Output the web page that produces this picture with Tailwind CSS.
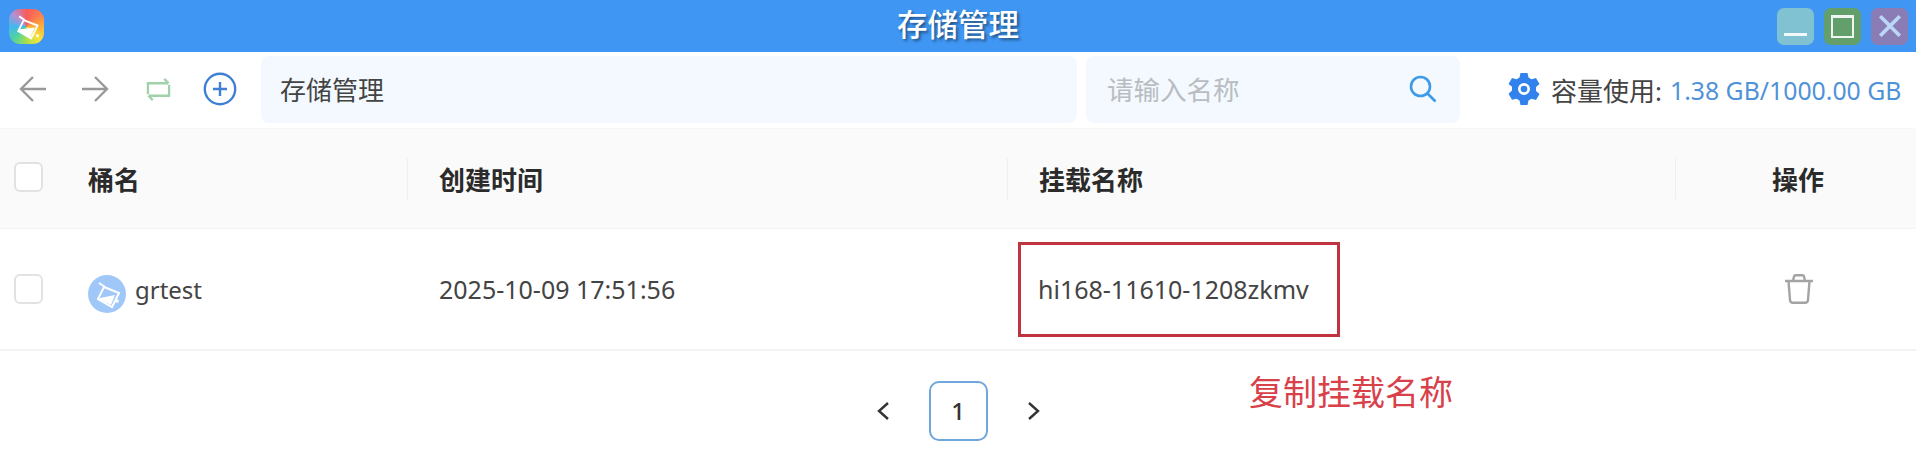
<!DOCTYPE html>
<html lang="zh-CN">
<head>
  <meta charset="UTF-8" />
  <meta name="viewport" content="width=device-width, initial-scale=1.0" />
  <title>存储管理</title>
  <script src="https://cdn.jsdelivr.net/npm/@tailwindcss/browser@4"></script>
</head>
<body class="bg-white min-h-screen overflow-hidden font-['Noto_Sans','Noto_Sans_CJK_SC',sans-serif] text-[#333]">
  <div class="relative w-[1916px] h-[467px]">
    <!-- 标题栏 -->
    <header class="relative h-[52px] bg-[#3f96f3] flex items-center justify-between pl-[9px] pr-[8px]">
      <div class="relative w-[35px] h-[35px] rounded-[11px] bg-[conic-gradient(from_0deg,#fb5a5c,#fb7a50,#fbb03a,#f7e23d,#a8df4d,#4fd3a0,#45b7ef,#b58fd0,#fb5a5c)]">
        <svg viewBox="0 0 38 38" class="w-[35px] h-[35px]" fill="none" stroke="#fff" stroke-width="2">
          <path d="M11 8l6 4" />
          <path d="M16 12l15 6-7 14-14-8z" />
          <path d="M12 22l16-2-5 11-12-7z" fill="#fff" stroke="none" />
          <circle cx="31" cy="29" r="1.600" fill="#fff" stroke="none" />
        </svg>
      </div>
      <h1 class="absolute left-0 right-0 top-0 text-center text-[30.500px] leading-[48px] font-medium text-white [text-shadow:2px_2px_3px_rgba(0,0,0,0.45)]">存储管理</h1>
      <div class="relative flex gap-[10px]">
        <button class="w-[37px] h-[37px] rounded-[7px] bg-[#80c1d2] flex items-end justify-center pb-[9px]">
          <span class="block w-[23px] h-[3px] bg-white/90"></span>
        </button>
        <button class="w-[37px] h-[37px] rounded-[7px] bg-[#629f6a] flex items-center justify-center">
          <span class="block w-[23px] h-[23px] border-2 border-t-[3px] border-white/90"></span>
        </button>
        <button class="w-[37px] h-[37px] rounded-[7px] bg-[#8a7db5] flex items-center justify-center">
          <svg viewBox="0 0 24 24" class="w-[26px] h-[26px]" fill="none" stroke="#bcd6f7" stroke-width="3.400"><path d="M3 3l18 18M21 3L3 21" /></svg>
        </button>
      </div>
    </header>

    <!-- 工具栏 -->
    <div class="h-[77px] flex items-center border-b border-[#f6f6f6] pb-[2px]">
      <div class="w-[261px] flex items-center shrink-0">
        <svg viewBox="0 0 28 28" class="ml-[19px] w-[28px] h-[28px]" fill="none" stroke="#999" stroke-width="2.400"><path d="M27 14H2M14 2L2 14l12 12" /></svg>
        <svg viewBox="0 0 28 28" class="ml-[34px] w-[28px] h-[28px]" fill="none" stroke="#999" stroke-width="2.400"><path d="M1 14h25M14 2l12 12-12 12" /></svg>
        <svg viewBox="0 0 28 26" class="ml-[36px] w-[27px] h-[25px]" fill="none" stroke="#a0d1a8" stroke-width="2.400"><path d="M3 18V6.500h21M20 2l4.500 4.500M25 8v11.500H4M8 24l-4.500-4.500" /></svg>
        <svg viewBox="0 0 34 34" class="ml-[31px] w-[34px] h-[34px]" fill="none" stroke="#3f80d6" stroke-width="2.400"><circle cx="17" cy="17" r="15.200" /><path d="M17 10v14M10 17h14" /></svg>
      </div>
      <div class="w-[816px] h-[67px] shrink-0 rounded-[8px] bg-[#f3f9fe] flex items-center pl-[19px] pt-[3px] text-[26px] text-[#444]">存储管理</div>
      <div class="ml-[9px] w-[374px] h-[67px] shrink-0 rounded-[8px] bg-[#f3f9fe] flex items-center justify-between pl-[21px] pr-[22px]">
        <span class="text-[26.500px] pt-[3px] text-[#b9bdc2]">请输入名称</span>
        <svg viewBox="0 0 30 30" class="w-[30px] h-[30px]" fill="none" stroke="#3f9ae8" stroke-width="2.600"><circle cx="12.500" cy="12.500" r="9.500" /><path d="M19.500 19.500l8 8" /></svg>
      </div>
      <div class="ml-[48px] flex items-center">
        <svg viewBox="0 0 32 34" class="w-[32px] h-[34px]">
          <path fill="#3182ec" fill-rule="evenodd" d="M12.500 1h7l1 4.600 3 1.700 4.500-1.400 3.500 6-3.500 3.200v3.800l3.500 3.200-3.500 6-4.500-1.400-3 1.700-1 4.600h-7l-1-4.600-3-1.700L4 27.700l-3.500-6L4 18.500v-3.800L.5 11.900l3.500-6 4.500 1.400 3-1.700zM16 11a6 6 0 100 12 6 6 0 000-12z" />
          <circle cx="16" cy="17" r="3.300" fill="#3182ec" />
        </svg>
        <span class="ml-[11px] text-[26px] text-[#444] leading-none pt-[3px]">容量使用:</span>
        <span class="ml-[8px] text-[24.800px] text-[#4f92d8] leading-none pt-[3px]">1.38 GB/1000.00 GB</span>
      </div>
    </div>

    <!-- 表头 -->
    <div class="h-[100px] bg-[#fafafa] flex items-center border-b border-[#f3f3f3] text-[26px] font-bold text-[#2b2b2b]">
      <div class="w-[88px] shrink-0 pl-[14px] pb-[3px]">
        <span class="block w-[29px] h-[30px] rounded-[6px] border-2 border-[#e2e2e2] bg-white"></span>
      </div>
      <div class="w-[319px] shrink-0 pt-[3px]">桶名</div>
      <div class="w-[600px] shrink-0 pl-[31px] h-[41px] flex items-center border-l border-[#efefef] pt-[3px]">创建时间</div>
      <div class="w-[668px] shrink-0 pl-[31px] h-[41px] flex items-center border-l border-[#efefef] pt-[3px]">挂载名称</div>
      <div class="flex-1 pl-[96px] h-[41px] flex items-center border-l border-[#efefef] pt-[3px]">操作</div>
    </div>

    <!-- 数据行 -->
    <div class="h-[122px] flex items-center border-b-2 border-[#f3f3f3] text-[25px] text-[#444]">
      <div class="w-[88px] shrink-0 pl-[14px] pb-[1px]">
        <span class="block w-[29px] h-[30px] rounded-[6px] border-2 border-[#e2e2e2] bg-white"></span>
      </div>
      <div class="w-[319px] shrink-0 flex items-center gap-[9px] pt-[9px]">
        <span class="w-[38px] h-[38px] rounded-full bg-[#9fc8f9]">
          <svg viewBox="0 0 38 38" class="w-[38px] h-[38px]" fill="none" stroke="#fff" stroke-width="2">
            <path d="M11 8l6 4" />
            <path d="M16 12l15 6-7 14-14-8z" />
            <path d="M12 23l15-3-4 10-12-6z" fill="#fff" stroke="none" />
            <circle cx="29" cy="26" r="1.800" fill="#fff" stroke="none" />
          </svg>
        </span>
        <span class="-mt-[8px] text-[24px]">grtest</span>
      </div>
      <div class="w-[600px] shrink-0 pl-[32px] pt-[2px]">2025-10-09 17:51:56</div>
      <div class="w-[668px] shrink-0 pl-[31px] pt-[2px]">hi168-11610-1208zkmv</div>
      <div class="flex-1 pl-[110px]">
        <svg viewBox="0 0 28 30" class="w-[28px] h-[30px]" fill="none" stroke="#a3a3a3" stroke-width="2.400"><path d="M0 7h28M8 7l1-4.500q.3-1.300 1.700-1.300h6.600q1.400 0 1.700 1.300l1 4.500M3.500 7l1.500 19q.2 2.800 3 2.800h12q2.800 0 3-2.800l1.500-19" /></svg>
      </div>
    </div>

    <!-- 分页 -->
    <nav class="flex items-center justify-center gap-[39px] pt-[30px] text-[#333]">
      <svg viewBox="0 0 14 20" class="w-[14px] h-[20px]" fill="none" stroke="#333" stroke-width="2.400"><path d="M12 2L3 10l9 8" /></svg>
      <span class="w-[59px] h-[60px] rounded-[10px] border-2 border-[#6fa6dc] flex items-center justify-center text-[24px] font-medium">1</span>
      <svg viewBox="0 0 14 20" class="w-[14px] h-[20px]" fill="none" stroke="#333" stroke-width="2.400"><path d="M2 2l9 8-9 8" /></svg>
    </nav>

    <!-- 红色标注 -->
    <div class="absolute left-[1018px] top-[242px] w-[322px] h-[95px] border-[3px] border-[#c0343f]"></div>
    <div class="absolute left-[1249px] top-[368px] text-[34px] leading-[48px] text-[#d9414a]">复制挂载名称</div>
  </div>
</body>
</html>
